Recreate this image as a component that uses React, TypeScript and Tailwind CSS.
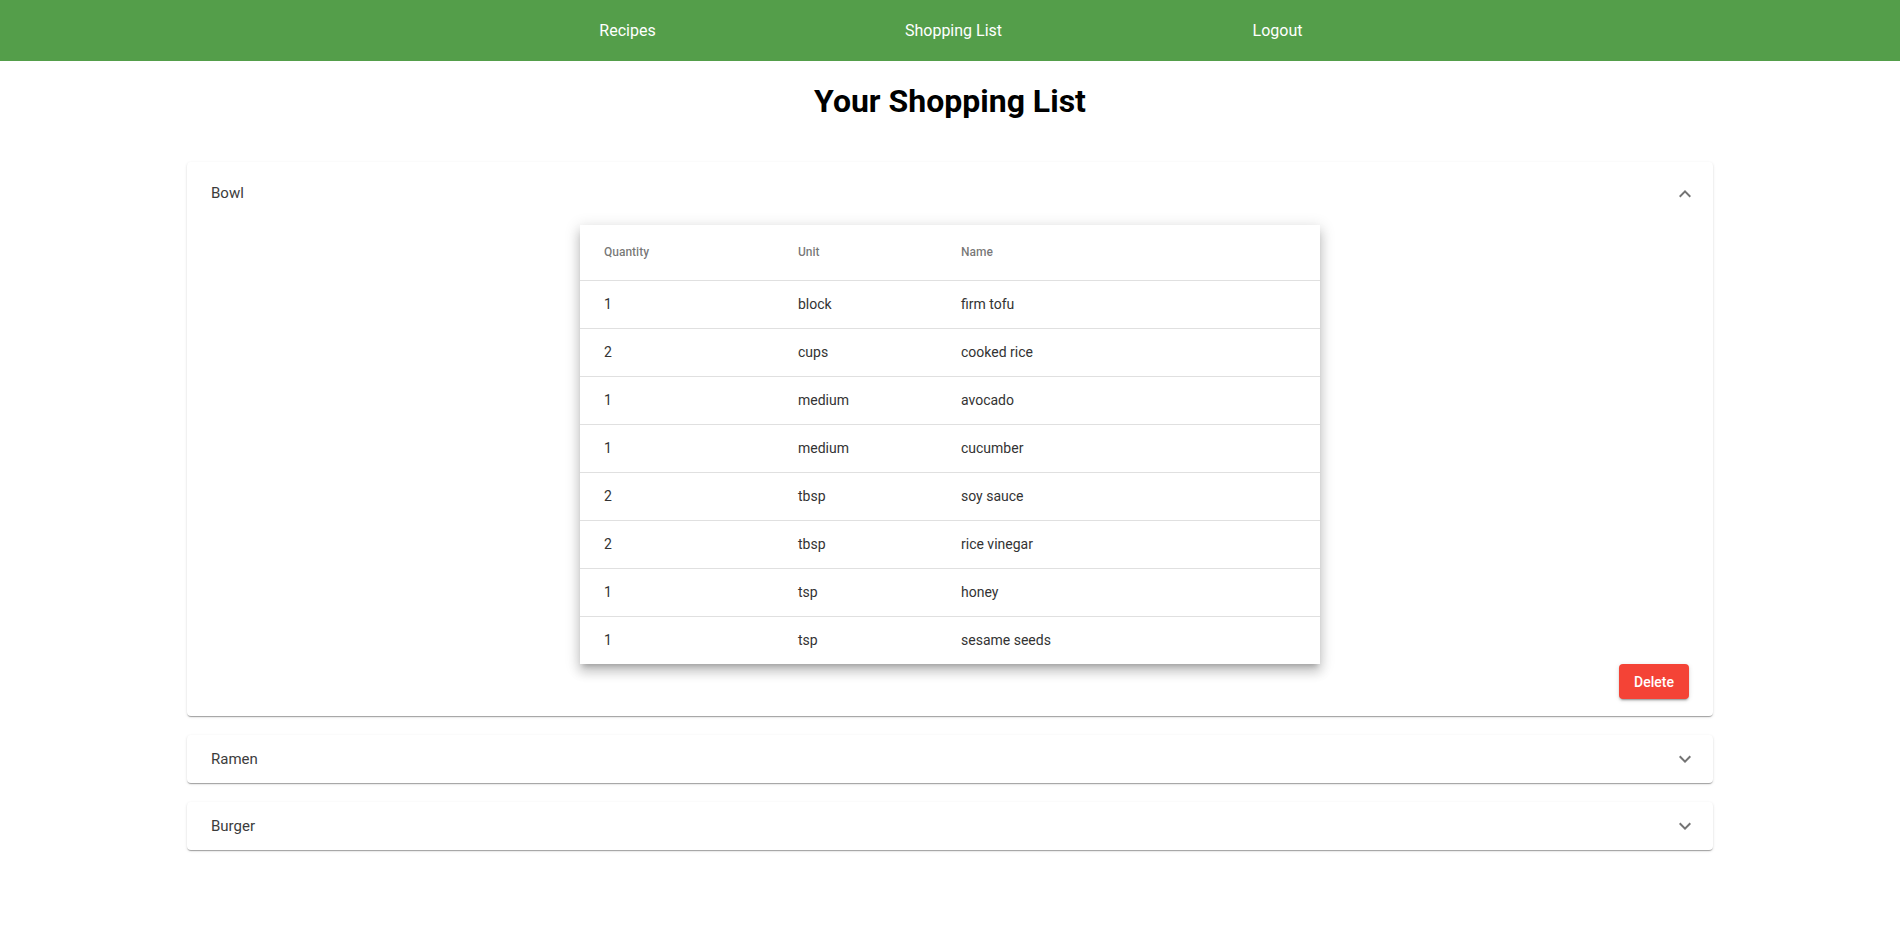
import { useState } from "react";

interface Ingredient {
  quantity: string;
  unit: string;
  name: string;
}

interface ShoppingItem {
  recipe: string;
  ingredients: Ingredient[];
}

const items: ShoppingItem[] = [
  {
    recipe: "Bowl",
    ingredients: [
      { quantity: "1", unit: "block", name: "firm tofu" },
      { quantity: "2", unit: "cups", name: "cooked rice" },
      { quantity: "1", unit: "medium", name: "avocado" },
      { quantity: "1", unit: "medium", name: "cucumber" },
      { quantity: "2", unit: "tbsp", name: "soy sauce" },
      { quantity: "2", unit: "tbsp", name: "rice vinegar" },
      { quantity: "1", unit: "tsp", name: "honey" },
      { quantity: "1", unit: "tsp", name: "sesame seeds" },
    ],
  },
  { recipe: "Ramen", ingredients: [] },
  { recipe: "Burger", ingredients: [] },
];

function ExpandIcon({ open }: { open: boolean }) {
  return (
    <svg
      viewBox="0 0 24 24"
      className={`h-6 w-6 fill-black/55 ${open ? "rotate-180" : ""}`}
    >
      <path d="M16.59 8.59 12 13.17 7.41 8.59 6 10l6 6 6-6z" />
    </svg>
  );
}

export default function App() {
  const [open, setOpen] = useState<string | null>("Bowl");

  return (
    <div className="min-h-screen bg-white font-['Roboto',sans-serif]">
      {/* 상단 네비게이션 */}
      <nav className="flex h-[61px] items-center justify-center bg-[#549e4a] pl-[3px] text-base text-white">
        <a className="w-[326px] text-center">Recipes</a>
        <a className="w-[326px] text-center">Shopping List</a>
        <a className="w-[322px] text-center">Logout</a>
      </nav>

      <h1 className="mt-[21px] text-center text-[32px] font-bold leading-[38px] text-black">
        Your Shopping List
      </h1>

      <div className="mx-auto mt-[42px] flex w-[1526px] flex-col gap-[19px]">
        {items.map((item) => {
          const isOpen = open === item.recipe;
          return (
            <div
              key={item.recipe}
              className="rounded bg-white shadow-[0_2px_1px_-1px_rgba(0,0,0,0.2),0_1px_1px_0_rgba(0,0,0,0.14),0_1px_3px_0_rgba(0,0,0,0.12)]"
            >
              <button
                onClick={() => setOpen(isOpen ? null : item.recipe)}
                className={`flex w-full items-center justify-between pl-6 pr-4 text-left ${
                  isOpen ? "h-[63px]" : "h-12"
                }`}
              >
                <span className="text-[15px] text-[#3c3c3c]">{item.recipe}</span>
                <ExpandIcon open={isOpen} />
              </button>

              {isOpen && (
                <div className="px-6 pb-[17px]">
                  <div className="mx-auto w-[740px] bg-white shadow-[0_5px_5px_-3px_rgba(0,0,0,0.2),0_8px_10px_1px_rgba(0,0,0,0.14),0_3px_14px_2px_rgba(0,0,0,0.12)]">
                    <table className="w-full border-collapse">
                      <thead>
                        <tr className="h-[55px] border-b border-[#e0e0e0]">
                          <th className="w-[194px] pl-6 text-left text-xs font-medium text-black/55">
                            Quantity
                          </th>
                          <th className="w-[163px] pl-6 text-left text-xs font-medium text-black/55">
                            Unit
                          </th>
                          <th className="pl-6 text-left text-xs font-medium text-black/55">
                            Name
                          </th>
                        </tr>
                      </thead>
                      <tbody>
                        {item.ingredients.map((ing, index) => (
                          <tr
                            key={index}
                            className="h-12 border-b border-[#e0e0e0] last:border-b-0 text-sm text-[#333]"
                          >
                            <td className="pl-6">{ing.quantity}</td>
                            <td className="pl-6">{ing.unit}</td>
                            <td className="pl-6">{ing.name}</td>
                          </tr>
                        ))}
                      </tbody>
                    </table>
                  </div>
                  <div className="flex justify-end">
                    <button className="h-[35px] w-[70px] rounded bg-[#f44336] text-sm font-medium text-white shadow-[0_3px_1px_-2px_rgba(0,0,0,0.2),0_2px_2px_0_rgba(0,0,0,0.14),0_1px_5px_0_rgba(0,0,0,0.12)]">
                      Delete
                    </button>
                  </div>
                </div>
              )}
            </div>
          );
        })}
      </div>
    </div>
  );
}
